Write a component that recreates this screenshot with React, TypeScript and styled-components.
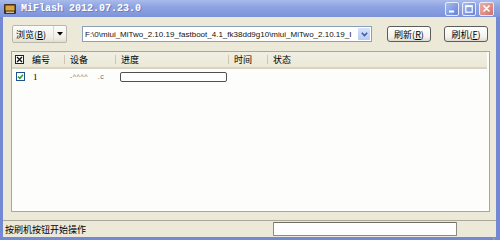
import styled, { createGlobalStyle } from "styled-components";

const GlobalStyle = createGlobalStyle`
  html, body {
    margin: 0;
    padding: 0;
    background: #ffffff;
  }
  body {
    font-family: "Noto Sans CJK SC", "Liberation Sans", sans-serif;
  }
`;

const Window = styled.div`
  width: 500px;
  height: 240px;
  display: flex;
  flex-direction: column;
  background: #7389d3;
  overflow: hidden;
`;

const TitleBar = styled.div`
  height: 17px;
  display: flex;
  align-items: center;
  padding: 0 6px 0 4px;
  background: linear-gradient(to bottom, #a9bbec 0%, #8ea4e2 40%, #7c93da 100%);
`;

const TitleText = styled.span`
  margin-left: 5px;
  font-family: "Liberation Mono", monospace;
  font-weight: bold;
  font-size: 10px;
  color: #ffffff;
  text-shadow: 1px 1px 0 #6a7fc4;
  flex: 1;
`;

const CaptionButtons = styled.div`
  display: flex;
  gap: 3px;
  align-items: center;
`;

const CaptionButton = styled.div<{ $close?: boolean }>`
  width: ${(p) => (p.$close ? 15 : 14)}px;
  height: 14px;
  border-radius: 2px;
  box-sizing: border-box;
  border: 1px solid #e8ecfa;
  background: ${(p) =>
    p.$close
      ? "linear-gradient(135deg, #e9b0aa 0%, #dc8c82 60%, #cd7168 100%)"
      : "linear-gradient(135deg, #a9bcf0 0%, #7f98e2 60%, #6a84d6 100%)"};
  display: flex;
  align-items: center;
  justify-content: center;
`;

const Body = styled.div`
  flex: 1;
  margin: 0 4px 3px 3px;
  background: #ece9d8;
  display: flex;
  flex-direction: column;
  min-height: 0;
`;

const Toolbar = styled.div`
  display: flex;
  align-items: center;
  padding: 8px 0 0 9px;
  height: 18px;
`;

const SplitButton = styled.div`
  width: 55px;
  height: 18px;
  box-sizing: border-box;
  border: 1px solid #b9b7ab;
  border-radius: 2px;
  background: linear-gradient(to bottom, #fcfcfa 0%, #f1efe6 70%, #e2dfd0 100%);
  display: flex;
  align-items: center;
`;

const SplitLabel = styled.span`
  flex: 1;
  font-size: 9px;
  color: #000;
  padding-left: 3px;
  line-height: 1;
`;

const SplitArrow = styled.span`
  width: 12px;
  height: 100%;
  display: flex;
  align-items: center;
  justify-content: center;
  border-left: 1px solid #dcdacd;
`;

const Combo = styled.div`
  margin-left: 15px;
  width: 290px;
  height: 16px;
  box-sizing: border-box;
  border: 1px solid #8aa0ba;
  background: #ffffff;
  display: flex;
  align-items: center;
`;

const ComboText = styled.span`
  flex: 1;
  font-family: "Liberation Sans", Arial, sans-serif;
  font-size: 8px;
  color: #111;
  padding-left: 2px;
  white-space: nowrap;
  overflow: hidden;
`;

const ComboDrop = styled.span`
  width: 12px;
  height: 12px;
  margin-right: 1px;
  border-radius: 1px;
  background: linear-gradient(to bottom, #d6e2fb 0%, #b7cbf5 100%);
  display: flex;
  align-items: center;
  justify-content: center;
`;

const PushButton = styled.div<{ $gap: number }>`
  margin-left: ${(p) => p.$gap}px;
  width: 44px;
  height: 16px;
  box-sizing: border-box;
  border: 1px solid #5c5c58;
  border-radius: 3px;
  background: linear-gradient(to bottom, #ffffff 0%, #f3f2ed 70%, #dedcd2 100%);
  display: flex;
  align-items: center;
  justify-content: center;
  font-size: 9px;
  color: #000;
  line-height: 1;
`;

const Key = styled.span`
  text-decoration: underline;
`;

const ListView = styled.div`
  margin: 8px 6px 0 8px;
  flex: 1;
  min-height: 0;
  border: 1px solid #a9a797;
  background: #fdfdfb;
  display: flex;
  flex-direction: column;
`;

const columns = "52px 51px 113px 39px 1fr";

const HeaderRow = styled.div`
  display: grid;
  grid-template-columns: ${columns};
  height: 15px;
  background: linear-gradient(to bottom, #f1efe3 0%, #ebe8d7 100%);
  border-bottom: 2px solid #d8d4c2;
  margin-right: 2px;
`;

const HeaderCell = styled.div<{ $pad?: number }>`
  display: flex;
  align-items: center;
  gap: 8px;
  padding-left: ${(p) => p.$pad ?? 6}px;
  font-size: 9px;
  color: #000;
  line-height: 1;
  position: relative;
  &:not(:first-child)::before {
    content: "";
    position: absolute;
    left: 0;
    top: 3px;
    bottom: 3px;
    width: 1px;
    background: #cbc7b4;
  }
`;

const Row = styled.div`
  display: grid;
  grid-template-columns: ${columns};
  height: 13px;
  margin-top: 1px;
`;

const Cell = styled.div<{ $pad?: number }>`
  display: flex;
  align-items: center;
  gap: 8px;
  padding-left: ${(p) => p.$pad ?? 6}px;
  font-family: "Liberation Serif", serif;
  font-size: 9px;
  color: #000;
`;

const Blurred = styled.span`
  font-family: "Liberation Sans", Arial, sans-serif;
  font-size: 7px;
  color: #6d6d6d;
  letter-spacing: 0.5px;
  white-space: pre;
`;

const Progress = styled.div`
  width: 107px;
  height: 10px;
  box-sizing: border-box;
  border: 1px solid #505050;
  border-radius: 2px;
  background: #ffffff;
`;

const StatusBar = styled.div`
  margin-top: 8px;
  height: 17px;
  border-top: 1px solid #aaa797;
  display: flex;
  align-items: center;
  box-sizing: border-box;
`;

const StatusText = styled.span`
  width: 268px;
  padding-left: 2px;
  font-size: 9px;
  color: #000;
  line-height: 1;
`;

const StatusPanel = styled.div`
  width: 184px;
  height: 14px;
  box-sizing: border-box;
  border: 1px solid #8d8b80;
  border-top-color: #6f6d63;
  background: #ffffff;
  border-radius: 1px;
`;

const Grip = styled.div`
  margin-left: auto;
  margin-right: 1px;
  align-self: flex-end;
  width: 10px;
  height: 10px;
`;

function Check({ checked }: { checked: "x" | "v" }) {
  return (
    <svg width="9" height="9" viewBox="0 0 9 9">
      <rect x="0.5" y="0.5" width="8" height="8" fill="#fff" stroke={checked === "x" ? "#222" : "#1f4f94"} />
      {checked === "x" ? (
        <path d="M2 2 L7 7 M7 2 L2 7" stroke="#111" strokeWidth="1.4" />
      ) : (
        <path d="M2 4.5 L3.8 6.3 L7 2.8" stroke="#21a121" strokeWidth="1.5" fill="none" />
      )}
    </svg>
  );
}

export default function App() {
  return (
    <>
      <GlobalStyle />
      <Window>
        <TitleBar>
          <svg width="12" height="12" viewBox="0 0 12 12">
            <rect x="0" y="1" width="12" height="10" rx="1" fill="#3d3222" />
            <rect x="1.5" y="2.5" width="9" height="5" fill="#e0a23a" />
            <rect x="2" y="8.5" width="8" height="1.5" fill="#c7c0a8" />
          </svg>
          <TitleText>MiFlash 2012.07.23.0</TitleText>
          <CaptionButtons>
            <CaptionButton>
              <svg width="8" height="8" viewBox="0 0 8 8">
                <rect x="1" y="5.5" width="5" height="2" fill="#fff" />
              </svg>
            </CaptionButton>
            <CaptionButton>
              <svg width="8" height="8" viewBox="0 0 8 8">
                <rect x="0.8" y="0.8" width="6.4" height="6.4" fill="none" stroke="#fff" strokeWidth="1.2" />
                <rect x="0.5" y="0.5" width="7" height="1.6" fill="#fff" />
              </svg>
            </CaptionButton>
            <CaptionButton $close>
              <svg width="9" height="9" viewBox="0 0 9 9">
                <path d="M1.5 1.5 L7.5 7.5 M7.5 1.5 L1.5 7.5" stroke="#fff" strokeWidth="1.6" />
              </svg>
            </CaptionButton>
          </CaptionButtons>
        </TitleBar>
        <Body>
          <Toolbar>
            <SplitButton>
              <SplitLabel>
                浏览(<Key>B</Key>)
              </SplitLabel>
              <SplitArrow>
                <svg width="6" height="4" viewBox="0 0 6 4">
                  <path d="M0 0 H6 L3 3.5 Z" fill="#000" />
                </svg>
              </SplitArrow>
            </SplitButton>
            <Combo>
              <ComboText>F:\0\miui_MiTwo_2.10.19_fastboot_4.1_fk38dd9g10\miui_MiTwo_2.10.19_I</ComboText>
              <ComboDrop>
                <svg width="7" height="5" viewBox="0 0 7 5">
                  <path d="M0.8 0.8 L3.5 3.6 L6.2 0.8" stroke="#3c5aa8" strokeWidth="1.5" fill="none" />
                </svg>
              </ComboDrop>
            </Combo>
            <PushButton $gap={15}>
              刷新(<Key>R</Key>)
            </PushButton>
            <PushButton $gap={13}>
              刷机(<Key>F</Key>)
            </PushButton>
          </Toolbar>
          <ListView>
            <HeaderRow>
              <HeaderCell $pad={3}>
                <Check checked="x" />
                编号
              </HeaderCell>
              <HeaderCell>设备</HeaderCell>
              <HeaderCell>进度</HeaderCell>
              <HeaderCell>时间</HeaderCell>
              <HeaderCell>状态</HeaderCell>
            </HeaderRow>
            <Row>
              <Cell $pad={4}>
                <Check checked="v" />
                1
              </Cell>
              <Cell>
                <Blurred>{"-^^^^    .c"}</Blurred>
              </Cell>
              <Cell $pad={5}>
                <Progress />
              </Cell>
              <Cell />
              <Cell />
            </Row>
          </ListView>
          <StatusBar>
            <StatusText>按刷机按钮开始操作</StatusText>
            <StatusPanel />
            <Grip>
              <svg width="10" height="10" viewBox="0 0 10 10">
                {[
                  [8, 2],
                  [5, 5],
                  [8, 5],
                  [2, 8],
                  [5, 8],
                  [8, 8],
                ].map(([x, y], i) => (
                  <rect key={i} x={x} y={y} width="1.5" height="1.5" fill="#b2ae9c" />
                ))}
              </svg>
            </Grip>
          </StatusBar>
        </Body>
      </Window>
    </>
  );
}
